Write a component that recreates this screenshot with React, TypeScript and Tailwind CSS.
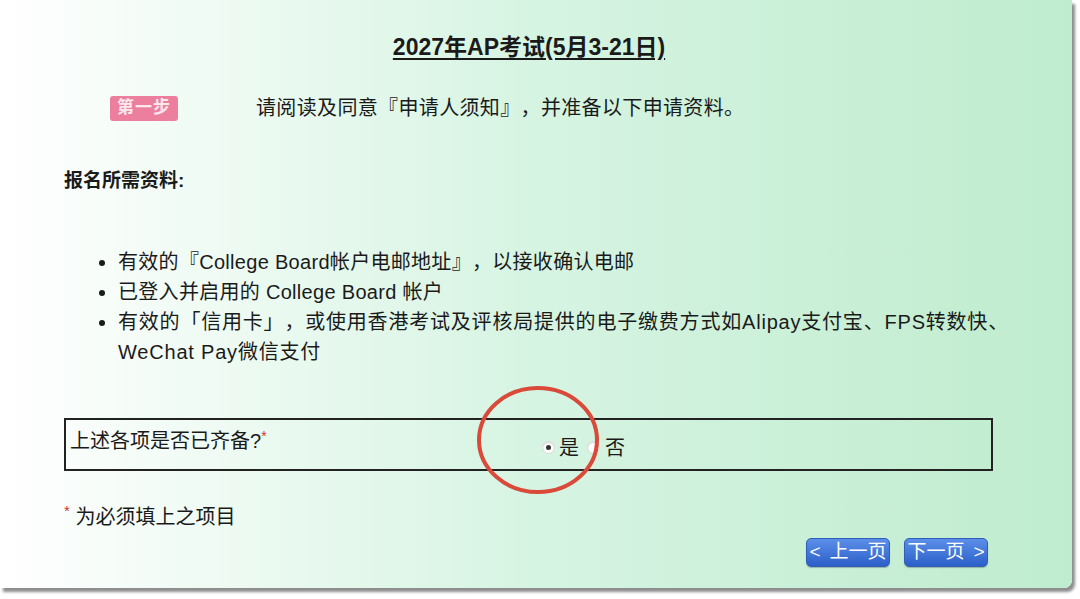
const font = "font-['Liberation_Sans','Noto_Sans_CJK_SC',sans-serif]";

function Radio({ checked }: { checked?: boolean }) {
  return (
    <span className="flex h-[13px] w-[13px] items-center justify-center rounded-full border border-[#d8d8d8] bg-white shadow-[inset_0_1px_1px_rgba(0,0,0,0.15)]">
      {checked && <span className="h-[5px] w-[5px] rounded-full bg-[#333]" />}
    </span>
  );
}

function NavButton({ children }: { children: React.ReactNode }) {
  return (
    <button
      type="button"
      className="flex h-[29px] w-[84px] items-center justify-center gap-[9px] rounded-[5px] border border-[#2f5fb8] bg-gradient-to-b from-[#5b8fe8] to-[#2d5fc9] text-[19px] text-white shadow-[0_1px_1px_rgba(0,0,0,0.25)]"
    >
      {children}
    </button>
  );
}

export default function App() {
  return (
    <div className={`h-[599px] w-[1080px] overflow-hidden bg-white ${font} text-[#1a1a1a] [text-spacing-trim:space-all]`}>
      <div className="relative flex h-[588px] w-[1072px] flex-col rounded-br-[8px] bg-gradient-to-r from-[#ffffff] via-[#d6f4e2] to-[#bfecce] shadow-[3px_4px_3px_rgba(0,0,0,0.45)]">
        <h1 className="mt-[33px] ml-[-14px] text-center text-[23px] font-bold leading-[28px] underline underline-offset-[3px]">
          2027年AP考试(5月3-21日)
        </h1>

        <div className="mt-[32px] flex items-center">
          <span className="ml-[110px] flex h-[25px] w-[68px] items-center justify-center rounded-[3px] bg-[#ec7f9d] text-[17px] font-bold tracking-[1px] text-[#fde8ee]">
            第一步
          </span>
          <p className="ml-[78px] text-[20px] tracking-[0.35px]">请阅读及同意『申请人须知』，并准备以下申请资料。</p>
        </div>

        <p className="mt-[44px] ml-[64px] text-[19px] font-bold">报名所需资料:</p>

        <ul className="mt-[51px] ml-[96px] w-[936px] list-disc pl-[22px] text-[20px] leading-[30px] tracking-[0.3px]">
          <li>有效的『College Board帐户电邮地址』，以接收确认电邮</li>
          <li>已登入并启用的 College Board 帐户</li>
          <li className="tracking-[0.8px]">
            有效的「信用卡」，或使用香港考试及评核局提供的电子缴费方式如Alipay支付宝、FPS转数快、WeChat Pay微信支付
          </li>
        </ul>

        <div className="mt-[51px] ml-[64px] flex h-[53px] w-[929px] border-2 border-[#222]">
          <div className="w-[474px] pt-[6px] pl-[4px] text-[20px]">
            上述各项是否已齐备?<sup className="text-[14px] text-[#d0342c]">*</sup>
          </div>
          <div className="flex items-center pt-[7px] text-[20px]">
            <span className="ml-[2px]">
              <Radio checked />
            </span>
            <span className="ml-[4px]">是</span>
            <span className="ml-[8px]">
              <Radio />
            </span>
            <span className="ml-[5px]">否</span>
          </div>
        </div>

        <p className="mt-[31px] ml-[64px] text-[20px]">
          <sup className="text-[15px] text-[#d0342c]">*</sup> 为必须填上之项目
        </p>

        <div className="mt-[6px] mr-[84px] flex justify-end gap-[14px]">
          <NavButton>
            <span>&lt;</span>
            <span>上一页</span>
          </NavButton>
          <NavButton>
            <span>下一页</span>
            <span>&gt;</span>
          </NavButton>
        </div>

        <svg className="absolute left-[476px] top-[385px]" width="124" height="110" viewBox="0 0 124 110">
          <ellipse cx="62" cy="55" rx="59" ry="52" fill="none" stroke="#d94a3a" strokeWidth="4" />
        </svg>
      </div>
    </div>
  );
}
